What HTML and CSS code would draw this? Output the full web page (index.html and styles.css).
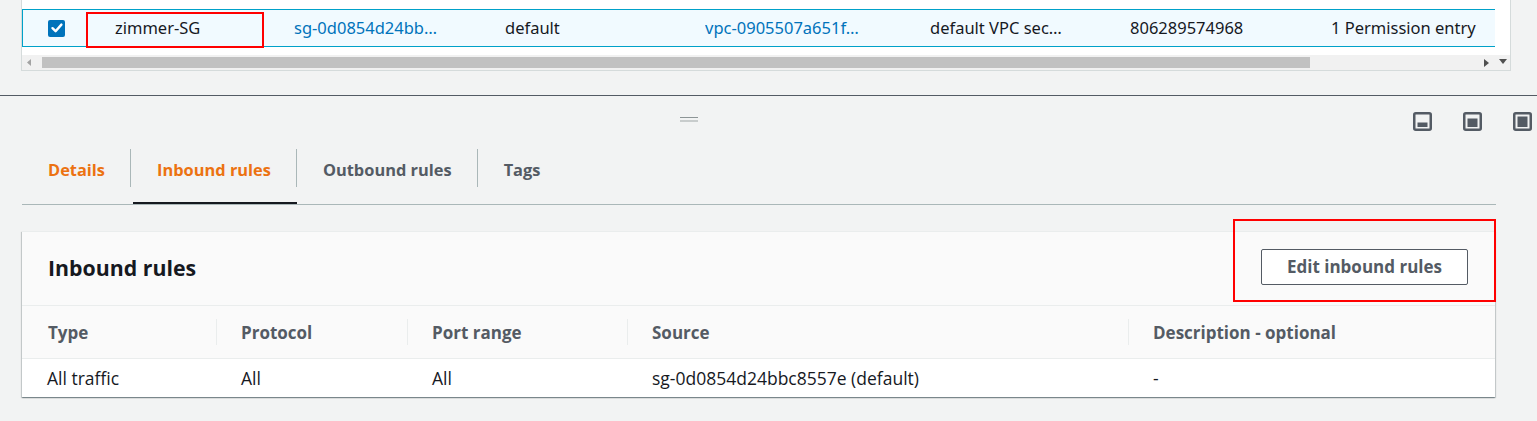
FILE: index.html
```html
<!DOCTYPE html>
<html lang="en">
<head>
<meta charset="utf-8">
<title>Security groups</title>
<link rel="stylesheet" href="styles.css">
</head>
<body>
<div class="top-table">
  <div class="top-main">
    <div class="sg-row">
      <div class="cell cell-check"><span class="checkbox"><svg width="16" height="16" viewBox="0 0 16 16"><path d="M3.5 8.2 L6.6 11.2 L12.4 4.6" fill="none" stroke="#fff" stroke-width="2.4" stroke-linecap="round" stroke-linejoin="round"/></svg></span></div>
      <div class="cell">zimmer-SG</div>
      <div class="cell link">sg-0d0854d24bb…</div>
      <div class="cell">default</div>
      <div class="cell link">vpc-0905507a651f…</div>
      <div class="cell">default VPC sec…</div>
      <div class="cell">806289574968</div>
      <div class="cell">1 Permission entry</div>
    </div>
    <div class="hscroll">
      <svg class="arrow-left" width="5" height="7" viewBox="0 0 5 7"><path d="M4 0 L0 3.5 L4 7Z" fill="#a3a3a3"/></svg>
      <div class="hscroll-thumb"></div>
      <svg class="arrow-right" width="5" height="8" viewBox="0 0 5 8"><path d="M0 0 L5 4 L0 8Z" fill="#505050"/></svg>
    </div>
  </div>
  <div class="vscroll">
    <div class="vscroll-track"></div>
    <div class="vscroll-corner"><svg width="8" height="5" viewBox="0 0 8 5"><path d="M0 0 L8 0 L4 5Z" fill="#505050"/></svg></div>
  </div>
</div>

<div class="split-divider"></div>
<div class="split-bar">
  <div class="drag-handle"><span class="handle-dark"></span><span class="handle-light"></span></div>
  <div class="view-icons">
    <svg width="19" height="19" viewBox="0 0 19 19"><rect x="1.25" y="1.25" width="16.5" height="16.5" rx="1.5" fill="none" stroke="#545b64" stroke-width="2.5"/><rect x="4.5" y="10.5" width="10" height="4.5" fill="#545b64"/></svg>
    <svg width="19" height="19" viewBox="0 0 19 19"><rect x="1.25" y="1.25" width="16.5" height="16.5" rx="1.5" fill="none" stroke="#545b64" stroke-width="2.5"/><rect x="4.5" y="6.5" width="10" height="8.5" fill="#545b64"/></svg>
    <svg width="19" height="19" viewBox="0 0 19 19"><rect x="1.25" y="1.25" width="16.5" height="16.5" rx="1.5" fill="none" stroke="#545b64" stroke-width="2.5"/><rect x="4.5" y="4.5" width="10" height="10.5" fill="#545b64"/></svg>
  </div>
</div>

<div class="tabs">
  <div class="tab"><span class="tab-label orange">Details</span></div>
  <div class="tab active"><span class="tab-label orange">Inbound rules</span></div>
  <div class="tab"><span class="tab-label">Outbound rules</span></div>
  <div class="tab"><span class="tab-label">Tags</span></div>
</div>

<div class="panel">
  <div class="panel-header">
    <h2 class="panel-title">Inbound rules</h2>
    <button class="btn">Edit inbound rules</button>
  </div>
  <div class="rules">
    <div class="th">Type</div>
    <div class="th sep">Protocol</div>
    <div class="th sep">Port range</div>
    <div class="th sep">Source</div>
    <div class="th sep">Description - optional</div>
    <div class="td">All traffic</div>
    <div class="td">All</div>
    <div class="td">All</div>
    <div class="td">sg-0d0854d24bbc8557e (default)</div>
    <div class="td">-</div>
  </div>
</div>

<div class="highlight highlight-name"></div>
<div class="highlight highlight-btn"></div>
</body>
</html>
```

FILE: styles.css
```css
* { box-sizing: border-box; }

html, body {
  margin: 0;
  padding: 0;
  background: #f2f3f3;
}

body {
  width: 1537px;
  height: 421px;
  overflow: hidden;
  position: relative;
  font-family: "Open Sans", "Noto Sans", sans-serif;
  color: #16191f;
}

/* ---------- top table ---------- */
.top-table {
  display: flex;
  margin-left: 21px;
  width: 1490px;
  background: #fff;
  border: 1px solid #d5dbdb;
  border-top: none;
}

.top-main {
  width: 1473px;
  padding-top: 9px;
}

.sg-row {
  display: grid;
  grid-template-columns: 92px 179px 211px 200px 225px 200px 201px 1fr;
  align-items: center;
  height: 38px;
  background: #f1faff;
  border: 1px solid #00a1c9;
  border-right: none;
  font-family: "Noto Sans", "Open Sans", sans-serif;
  font-size: 16.5px;
  color: #16191f;
}

.cell {
  white-space: nowrap;
  overflow: hidden;
  line-height: 22px;
}

.cell-check {
  padding-left: 25px;
  display: flex;
  align-items: center;
}

.checkbox {
  display: flex;
  width: 17px;
  height: 17px;
  align-items: center;
  justify-content: center;
  background: #0073bb;
  border-radius: 2px;
}

.link { color: #0073bb; }

.hscroll {
  position: relative;
  margin-top: 8px;
  height: 15px;
  background: #f1f1f1;
  display: flex;
  align-items: center;
}

.arrow-left { margin-left: 5px; }

.hscroll-thumb {
  margin-left: 10px;
  width: 1268px;
  height: 11px;
  background: #c1c1c1;
}

.arrow-right { margin-left: auto; margin-right: 6px; }

.vscroll {
  width: 15px;
  display: flex;
  flex-direction: column;
}

.vscroll-track {
  height: 55px;
  background: #fff;
}

.vscroll-corner {
  height: 15px;
  background: #f1f1f1;
  display: flex;
  align-items: center;
  justify-content: center;
  padding-bottom: 3px;
}

/* ---------- split panel bar ---------- */
.split-divider {
  margin-top: 24px;
  height: 1px;
  background: #545b64;
}

.split-bar {
  height: 53px;
  display: flex;
  align-items: flex-start;
}

.drag-handle {
  margin-left: 680px;
  margin-top: 21px;
  width: 18px;
  display: flex;
  flex-direction: column;
}

.handle-dark {
  height: 1px;
  background: #8d9596;
}

.handle-light {
  margin-top: 2px;
  height: 2px;
  background: #c8cccc;
}

.view-icons {
  margin-left: auto;
  margin-right: 5px;
  margin-top: 16px;
  display: flex;
  gap: 31px;
}

.view-icons svg { display: block; }

/* ---------- tabs ---------- */
.tabs {
  display: flex;
  margin: 0 41px 0 22px;
  border-bottom: 1px solid #aab7b8;
}

.tab {
  position: relative;
  padding-bottom: 17px;
}

.tab-label {
  display: block;
  height: 38px;
  padding: 4px 25px 0 26px;
  line-height: 34px;
  border-right: 1px solid #aab7b8;
  font-size: 16.4px;
  font-weight: 700;
  color: #545b64;
  white-space: nowrap;
}

.tab:last-child .tab-label { border-right: none; }

.tab-label.orange { color: #ec7211; }

.tab.active::after {
  content: "";
  position: absolute;
  left: 2px;
  right: 0;
  bottom: 0;
  height: 2px;
  background: #16191f;
}

/* ---------- panel ---------- */
.panel {
  margin: 26px 42px 0 22px;
  background: #fff;
  box-shadow: 0 1px 1px 0 rgba(0, 28, 36, 0.3), 1px 1px 1px 0 rgba(0, 28, 36, 0.15), -1px 1px 1px 0 rgba(0, 28, 36, 0.15);
}

.panel-header {
  height: 75px;
  display: flex;
  align-items: center;
  justify-content: space-between;
  padding: 0 27px 0 26px;
  background: #fafafa;
  border-top: 1px solid #eaeded;
  border-bottom: 1px solid #eaeded;
}

.panel-title {
  margin: 0 0 2px 0;
  font-size: 21.3px;
  font-weight: 700;
  line-height: 28px;
  color: #16191f;
}

.btn {
  margin-bottom: 4px;
  width: 207px;
  height: 36px;
  padding: 0;
  background: #fff;
  border: 1px solid #545b64;
  border-radius: 2px;
  font-family: "Open Sans", "Noto Sans", sans-serif;
  font-size: 17px;
  font-weight: 700;
  color: #545b64;
}

.rules {
  display: grid;
  grid-template-columns: 194px 191px 220px 501px 1fr;
}

.th {
  height: 53px;
  display: flex;
  align-items: center;
  padding-left: 26px;
  background: #fafafa;
  border-bottom: 1px solid #eaeded;
  font-size: 17px;
  font-weight: 700;
  color: #545b64;
  position: relative;
  white-space: nowrap;
}

.th.sep { padding-left: 25px; }

.th.sep::before {
  content: "";
  position: absolute;
  left: 0;
  top: 13px;
  width: 1px;
  height: 26px;
  background: #eaeded;
}

.td {
  height: 38px;
  display: flex;
  align-items: center;
  padding-left: 25px;
  padding-bottom: 1px;
  font-size: 17.5px;
  color: #16191f;
  white-space: nowrap;
}

.td:first-of-type { padding-left: 26px; }

/* ---------- annotations ---------- */
.highlight {
  position: absolute;
  border: 2px solid #f00;
}

.highlight-name {
  left: 86px;
  top: 12px;
  width: 178px;
  height: 36px;
}

.highlight-btn {
  left: 1233px;
  top: 219px;
  width: 263px;
  height: 83px;
}
```
